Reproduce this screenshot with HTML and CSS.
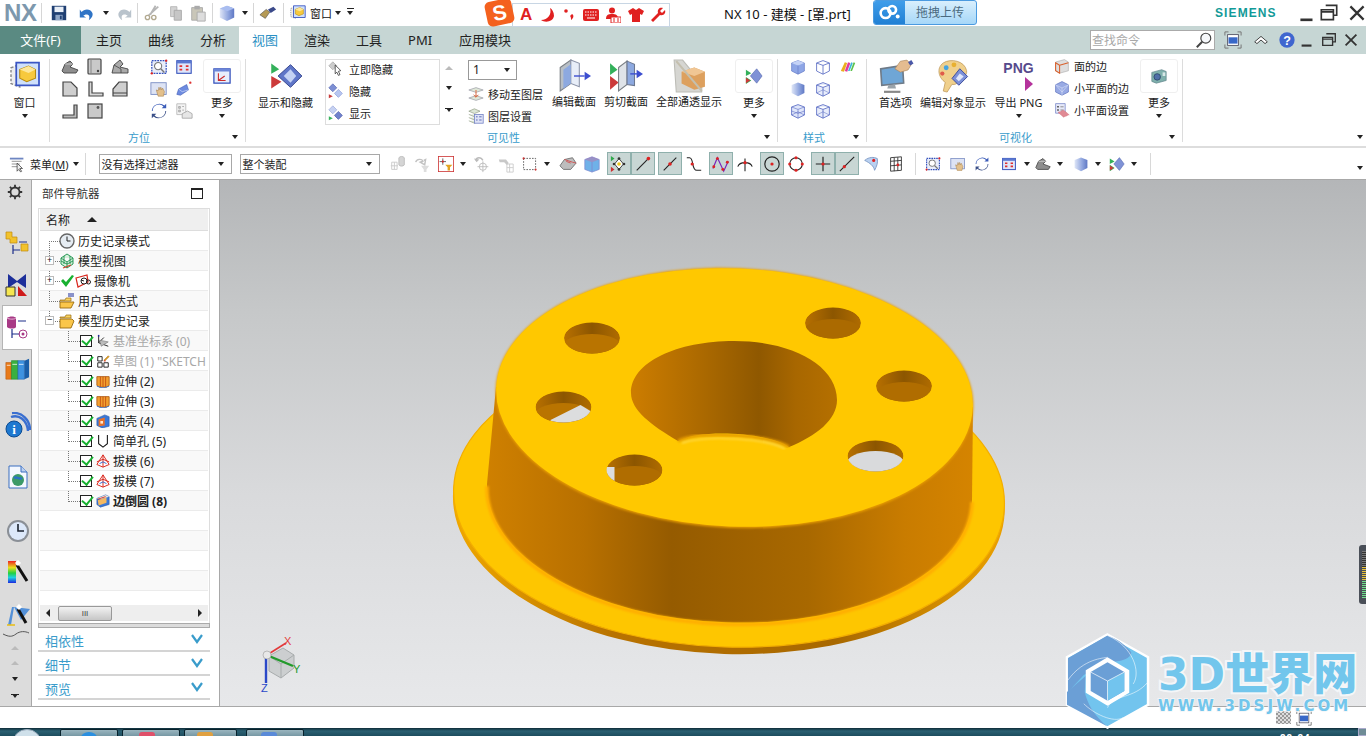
FILE: index.html
```html
<!DOCTYPE html>
<html lang="zh">
<head>
<meta charset="utf-8">
<title>NX 10 - 建模 - [罩.prt]</title>
<link rel="stylesheet" href="styles.css">
</head>
<body>
<svg class="defs" aria-hidden="true">
<defs>
<linearGradient id="gCube" x1="0" x2="1" y1="0" y2="0"><stop offset="0" stop-color="#dfe6f7"/><stop offset=".6" stop-color="#8ea4de"/><stop offset="1" stop-color="#5f78c4"/></linearGradient>
<linearGradient id="gWall" x1="0" x2="1" y1="0" y2="0"><stop offset="0" stop-color="#cf8000"/><stop offset=".2" stop-color="#b87000"/><stop offset=".38" stop-color="#955b00"/><stop offset=".66" stop-color="#a86800"/><stop offset=".86" stop-color="#c97c00"/><stop offset="1" stop-color="#d58400"/></linearGradient>
<linearGradient id="gBore" x1="0" x2="1" y1="0" y2="0"><stop offset="0" stop-color="#cd7d00"/><stop offset=".35" stop-color="#ab6900"/><stop offset=".62" stop-color="#8f5800"/><stop offset=".8" stop-color="#a86700"/><stop offset="1" stop-color="#b57000"/></linearGradient>
<linearGradient id="gHole" x1="0" x2="1" y1="0" y2="0"><stop offset="0" stop-color="#b87000"/><stop offset=".5" stop-color="#8c5600"/><stop offset="1" stop-color="#b06c00"/></linearGradient>
<linearGradient id="gEdge" x1="0" x2="1" y1="0" y2="0"><stop offset="0" stop-color="#f0a800"/><stop offset=".3" stop-color="#b87200"/><stop offset=".7" stop-color="#a86800"/><stop offset="1" stop-color="#eaa000"/></linearGradient>
<filter id="soft" x="-5%" y="-5%" width="110%" height="110%"><feGaussianBlur stdDeviation="1.3"/></filter>
<clipPath id="hc"><ellipse rx="28" ry="15.5"/></clipPath>

<symbol id="save" viewBox="0 0 20 20"><path d="M2 2h16v16H2z" fill="#1f3f72"/><path d="M5 3h10v6H5z" fill="#e8eef6"/><path d="M6 12h8v6H6z" fill="#8fa6c6"/><path d="M11 13h2v4h-2z" fill="#1f3f72"/></symbol>
<symbol id="undo" viewBox="0 0 20 20"><path d="M4 9c3-4 10-4 12 1 1 3-1 6-4 8 1-3 1-5-1-6-2-1-4 0-5 1l3 2H2V6z" fill="#2f74c6"/></symbol>
<symbol id="redo" viewBox="0 0 20 20"><path d="M16 9c-3-4-10-4-12 1-1 3 1 6 4 8-1-3-1-5 1-6 2-1 4 0 5 1l-3 2h7V6z" fill="#b9c3cc"/></symbol>
<symbol id="cut" viewBox="0 0 20 20"><path d="M17 3L6 13M14 2L8 12" stroke="#b5b5b5" stroke-width="2"/><circle cx="5" cy="15" r="2.4" fill="none" stroke="#b2a990" stroke-width="1.5"/><circle cx="12" cy="15" r="2.4" fill="none" stroke="#b2a990" stroke-width="1.5"/></symbol>
<symbol id="copy" viewBox="0 0 20 20"><path d="M4 3h7v11H4z" fill="#d3d3d3" stroke="#b5b5b5"/><path d="M8 7h8v11H8z" fill="#c6c6c6" stroke="#a8a8a8"/></symbol>
<symbol id="paste" viewBox="0 0 20 20"><path d="M3 4h12v14H3z" fill="#c9c6b8" stroke="#aaa"/><path d="M6 2h6v4H6z" fill="#aaa"/><path d="M9 9h9v10H9z" fill="#ddd" stroke="#aaa"/></symbol>
<symbol id="cube" viewBox="0 0 20 20"><path d="M2 5l8-3 8 3v10l-8 4-8-4z" fill="url(#gCube)"/><path d="M2 5l8 3 8-3-8-3z" fill="#a9bdf0"/></symbol>
<symbol id="brush" viewBox="0 0 20 20"><path d="M1 12l7-6 4 3-5 7z" fill="#b59a55" stroke="#555" stroke-width=".7"/><path d="M10 6l6-3 3 3-6 4z" fill="#3b4a8a"/></symbol>
<symbol id="wina" viewBox="0 0 20 20"><path d="M2 5l5-2v13l-5-2z" fill="#eee" stroke="#888" stroke-width=".8" stroke-dasharray="1.5 1"/><path d="M5 2h13v13H5z" fill="#cfe0fb" stroke="#3b56c4"/><path d="M7 6l5-2 4 2v5l-5 2-4-2z" fill="#f7c93d" stroke="#b58a10" stroke-width=".6"/><path d="M7 6l5 2 4-2-4-2z" fill="#fde79a"/></symbol>

<symbol id="o1" viewBox="0 0 20 20"><path d="M2 14l3-7 5-3 3 3-3 3 8 3-2 3H4z" fill="#8e8e8e" stroke="#444" stroke-width=".9"/><path d="M5 7l8 0" stroke="#ccc"/></symbol>
<symbol id="o2" viewBox="0 0 20 20"><rect x="3" y="2" width="13" height="15" rx="1" fill="#c9c9c9" stroke="#444" stroke-width="1.2"/><circle cx="13" cy="14" r="1.2" fill="#444"/><path d="M6 2v15" stroke="#888"/></symbol>
<symbol id="o3" viewBox="0 0 20 20"><path d="M2 16l2-8 6-5 3 4-3 3 8 2v4z" fill="#aaa" stroke="#444" stroke-width=".9"/><path d="M4 8l7 4v4" fill="none" stroke="#444" stroke-width=".8"/></symbol>
<symbol id="o4" viewBox="0 0 20 20"><path d="M3 3h8l6 6v8H3z" fill="#cfcfcf" stroke="#444" stroke-width="1.2"/></symbol>
<symbol id="o5" viewBox="0 0 20 20"><path d="M4 3h3v11h11v3H4z" fill="#d9d9d9" stroke="#444" stroke-width="1.2"/></symbol>
<symbol id="o6" viewBox="0 0 20 20"><path d="M3 17v-7l6-7h8v14zM3 14h14" fill="#cfcfcf" stroke="#444" stroke-width="1.2"/></symbol>
<symbol id="o7" viewBox="0 0 20 20"><path d="M3 17h14V4h-3v10H3z" fill="#bbb" stroke="#444" stroke-width="1.2"/></symbol>
<symbol id="o8" viewBox="0 0 20 20"><rect x="3" y="3" width="14" height="14" fill="#c9c9c9" stroke="#444" stroke-width="1.2"/><circle cx="13" cy="6.500" r="1.400" fill="#555"/></symbol>
<symbol id="zfit" viewBox="0 0 20 20"><rect x="2" y="3" width="16" height="14" fill="#e9eefb" stroke="#3350bb" stroke-width="1.400" stroke-dasharray="2 1"/><circle cx="9" cy="9" r="4" fill="#fff" stroke="#777" stroke-width="1.200"/><path d="M12 12l4 4" stroke="#777" stroke-width="1.600"/><circle cx="18" cy="3" r="1.300" fill="#d22"/><circle cx="2" cy="17" r="1.300" fill="#d22"/></symbol>
<symbol id="zext" viewBox="0 0 20 20"><rect x="2" y="3" width="16" height="14" fill="#dfe6fa" stroke="#3350bb" stroke-width="1.200"/><rect x="2" y="3" width="16" height="3" fill="#5a77d0"/><path d="M5 8h3v2H5zM12 8h3v2h-3zM5 12h3v2H5zM12 12h3v2h-3z" fill="#e03030"/></symbol>
<symbol id="zpan" viewBox="0 0 20 20"><rect x="1" y="3" width="17" height="13" fill="#dde3f4" stroke="#7b8ec4"/><path d="M9 18l-2-7 2 1 1-4 1 3 1-3 1 3 1-2 2 4-1 5z" fill="#e3c08c" stroke="#a57f48" stroke-width=".6"/></symbol>
<symbol id="zbeam" viewBox="0 0 20 20"><path d="M2 16l2-6 9-5 2 6-9 6z" fill="#6d8be0" stroke="#3a55b0" stroke-width=".6"/><path d="M4 10l4 3 7-2" fill="none" stroke="#c9d5f6" stroke-width=".8"/><circle cx="17" cy="3" r="1.300" fill="#d33"/></symbol>
<symbol id="zrot" viewBox="0 0 20 20"><path d="M3 10a7 7 0 0 1 12-5l-2 2h5V2l-2 2A8.500 8.500 0 0 0 2 10z" fill="#3a5bb8"/><path d="M17 10a7 7 0 0 1-12 5l2-2H2v5l2-2a8.500 8.500 0 0 0 14-6z" fill="#3a4f88"/></symbol>
<symbol id="zdoc" viewBox="0 0 20 20"><path d="M2 2h10v12H2z" fill="#f3f3f3" stroke="#bbb"/><path d="M4 5h2v2H4zM8 5h2M4 9h2v2H4zM8 9h2" stroke="#aaa" fill="#ccc"/><path d="M8 13l6-3 5 3v5H8z" fill="#e6e6e6" stroke="#aaa"/></symbol>
<symbol id="csys" viewBox="0 0 20 20"><path d="M1 2h18v16H1z" fill="#e8eefc" stroke="#3350bb" stroke-width="1.400"/><path d="M1 2h18v3H1z" fill="#6c86d8"/><path d="M6 7v8h8M6 15l7-5" fill="none" stroke="#cc2a2a" stroke-width="1.200"/></symbol>
<symbol id="sh" viewBox="0 0 30 24"><path d="M2 1v9l7-4z" fill="#33b05a"/><path d="M2 12v11l9-6z" fill="#cc3a3a"/><path d="M8 12L19 2l10 10-10 10z" fill="#5f76c8" stroke="#2c3d88" stroke-width=".8"/><path d="M13 12l6-6 5 6-5 6z" fill="#c4d2f4"/></symbol>
<symbol id="hide1" viewBox="0 0 20 20"><path d="M1 6l5-5 5 5-5 5z" fill="#ccc" stroke="#999" stroke-width=".7"/><path d="M9 5l7 7-3 1 2 4-2 1-2-4-2 2z" fill="#fff" stroke="#333" stroke-width="1"/></symbol>
<symbol id="hide2" viewBox="0 0 20 20"><path d="M1 6l5-5 5 5-5 5z" fill="#7d8fd4" stroke="#4a5ba8" stroke-width=".7"/><path d="M1 14v5l5-2.500z" fill="#c83a3a"/><path d="M8 13l5-5 5 5-5 5z" fill="#b7c6f0" stroke="#7d8fd4" stroke-width=".7"/></symbol>
<symbol id="hide3" viewBox="0 0 20 20"><path d="M1 6l5-5 5 5-5 5z" fill="#c6d1f2" stroke="#8b9ad2" stroke-width=".7"/><path d="M1 14v5l5-2.500z" fill="#35b25a"/><path d="M8 13l5-5 5 5-5 5z" fill="#6f81cc" stroke="#3e4e9e" stroke-width=".7"/></symbol>
<symbol id="lmove" viewBox="0 0 20 20"><path d="M1 5l9-3 9 3-9 3z" fill="#dfe7d8" stroke="#778" stroke-width=".6"/><path d="M1 15l9-3 9 3-9 3z" fill="#dfe7d8" stroke="#778" stroke-width=".6"/><path d="M10 5v9M7 11l3 3 3-3" fill="none" stroke="#e0643a" stroke-width="1.200"/></symbol>
<symbol id="lset" viewBox="0 0 20 20"><path d="M1 4l7-3 7 3-7 3zM1 8l7 3 7-3M1 12l7 3 7-3M1 16l7 3 7-3" fill="#dde6d6" stroke="#7d8a70" stroke-width=".7"/><rect x="8" y="8" width="11" height="11" fill="#dfe3f6" stroke="#7383c6"/><path d="M10 11h2M14 11h3M10 15h2M14 15h3" stroke="#3b4fa8"/></symbol>
<symbol id="sedit" viewBox="0 0 32 32"><path d="M3 8l10-7v22L3 30z" fill="#b8bfc6" stroke="#7a7f85"/><path d="M13 1l8 3v22l-8-3z" fill="#e8eef8" stroke="#8c94a8"/><path d="M6 10l7-5v18l-7 5z" fill="#8da9e0"/><path d="M16 16h10" stroke="#3c4ed0" stroke-width="1.300"/><path d="M26 12l6 4-6 4z" fill="#3c4ed0"/></symbol>
<symbol id="scut" viewBox="0 0 32 32"><path d="M1 4v11l7-5z" fill="#33b05a"/><path d="M1 16v13l8-7z" fill="#cc3a3a"/><path d="M9 8l8-6v22l-8 6z" fill="#dfe3e8" stroke="#7a7f85"/><path d="M17 2l7 3v20l-7-1z" fill="#8da9e0" stroke="#6c7890"/><path d="M20 14h7" stroke="#3c4ed0" stroke-width="1.300"/><path d="M26 10l6 4-6 4z" fill="#3c4ed0"/></symbol>
<symbol id="sall" viewBox="0 0 32 32"><path d="M2 1h8l18 22v8H4z" fill="#d6d6d2" stroke="#bcbcb6"/><path d="M9 12l12-4 10 4v14l-10 3-12-6z" fill="#dda05e"/><path d="M9 12l12 4 10-4-10-4z" fill="#f0c694"/><path d="M4 2l24 28" stroke="#c4bfae" stroke-width="2"/></symbol>
<symbol id="morev" viewBox="0 0 20 20"><path d="M1 3v7l6-3zM1 11v8l6-4z" fill="#33b05a"/><path d="M1 12v6l5-3z" fill="#cc3a3a"/><path d="M6 10l7-8 6 8-6 8z" fill="#7f92d6" stroke="#4f60a8" stroke-width=".6"/></symbol>
<symbol id="st1" viewBox="0 0 20 20"><path d="M2 5l8-3 8 3v10l-8 4-8-4z" fill="#8ea6e6" stroke="#5e75c4" stroke-width=".8"/><path d="M2 5l8 3 8-3-8-3z" fill="#c4d2f6"/><path d="M10 8v11" stroke="#5e75c4" stroke-width=".7"/></symbol>
<symbol id="st2" viewBox="0 0 20 20"><path d="M2 5l8-3 8 3v10l-8 4-8-4zM2 5l8 3 8-3M10 8v11" fill="#fff" stroke="#5265c0"/></symbol>
<symbol id="st3" viewBox="0 0 20 20"><path d="M2 5l8-3 8 3v10l-8 4-8-4z" fill="url(#gCube)"/></symbol>
<symbol id="st4" viewBox="0 0 20 20"><path d="M2 5l8-3 8 3v10l-8 4-8-4zM2 5l8 3 8-3M10 8v11" fill="#e8edfb" stroke="#5265c0"/><path d="M2 15l8-4 8 4" fill="none" stroke="#5265c0" stroke-width=".6"/></symbol>
<symbol id="st5" viewBox="0 0 20 20"><path d="M2 5l8-3 8 3v10l-8 4-8-4z" fill="#dfe6fa" stroke="#5265c0"/><path d="M2 5l8 3 8-3M10 8v11M2 15l8-4 8 4M2 10l8 3 8-3" fill="none" stroke="#5265c0" stroke-width=".7"/></symbol>
<symbol id="rbw" viewBox="0 0 20 20"><path d="M1 15L6 4l3 1-4 11z" fill="#eab020"/><path d="M6 15L10 4l3 1-4 11z" fill="#e03aa0"/><path d="M10 15l4-11 2 1-4 10z" fill="#3bb8d8"/><path d="M13 15l4-11 2 1-4 10z" fill="#5cc24a"/></symbol>
<symbol id="pref" viewBox="0 0 32 32"><path d="M2 9l20-3 1 16-20 2z" fill="#6fa6d6" stroke="#6f7b88" stroke-width="1.500"/><path d="M9 24l6-1 1 4H8z" fill="#9aa3aa"/><path d="M5 29h15v2H5z" fill="#888"/><path d="M15 9l5-7 6-1 4 4-3 5-7 2z" fill="#e4bc90" stroke="#a07a50" stroke-width=".5"/><path d="M27 3l3-2 2 3-3 2z" fill="#4a58a8"/></symbol>
<symbol id="palette" viewBox="0 0 36 36"><path d="M8 4c8-5 22-2 24 8 1 6-6 6-8 10-1 3-4 5-7 4l-5 8-4-1 2-9C4 20 0 10 8 4z" fill="#f0d08c" stroke="#b89050" stroke-width=".7"/><circle cx="11" cy="9" r="2.500" fill="#45a4e0"/><circle cx="19" cy="6" r="2.500" fill="#e8b030"/><circle cx="7" cy="15" r="2.200" fill="#e05a4a"/><path d="M17 20l8-10 8 8-9 9z" fill="#7c90d8" stroke="#3c4c9c"/><path d="M21 20l4-5 4 3-5 5z" fill="#dfe6fa"/></symbol>
<symbol id="fedge" viewBox="0 0 20 20"><path d="M2 5l11-3 5 3v11l-11 3-5-3z" fill="#dedede" stroke="#999" stroke-width=".6"/><path d="M2 6l5 3v10l-5-3zM7 9l11-3" fill="none" stroke="#d9602c" stroke-width="1.300"/></symbol>
<symbol id="fcet" viewBox="0 0 20 20"><path d="M2 6l8-4 8 4v9l-8 4-8-4z" fill="#98aae4" stroke="#6b7ec4"/><path d="M2 6l8 4 8-4M10 10v9M2 6l8 9M18 6l-8 9" fill="none" stroke="#dfe6fa" stroke-width=".7"/></symbol>
<symbol id="fset" viewBox="0 0 20 20"><path d="M2 2h12v12H2z" fill="#e6e9f8" stroke="#7c8aca"/><path d="M4 5h2v2H4zM4 9h2v2H4z" fill="#444"/><path d="M8 6h4M8 10h4" stroke="#777"/><path d="M5 13l7-3 7 6-7 3z" fill="#e08a94" stroke="#c4505c" stroke-width=".6" stroke-dasharray="1 1"/></symbol>
<symbol id="cam" viewBox="0 0 20 20"><path d="M2 6l11-3 5 2v10l-11 3-5-2z" fill="#7fb0ac" stroke="#5a7c84" stroke-width=".7"/><circle cx="8" cy="11" r="3.600" fill="#4f6fa8" stroke="#2f4a6c"/><path d="M14 6h3v4h-3z" fill="#d8e8e8"/></symbol>
<symbol id="menu" viewBox="0 0 20 20"><path d="M1 3h15v2H1z" fill="#6e86c2"/><path d="M3 7h11M3 10h9M3 13h8" stroke="#8a8a8a"/><path d="M9 9v9l2-2 2 3 1-1-2-3h3z" fill="#eee" stroke="#333" stroke-width=".8"/></symbol>
<symbol id="sel1" viewBox="0 0 20 20"><path d="M2 12h8M6 8v8M3 8h6v8H3z" fill="none" stroke="#c9c9c9"/><path d="M11 3a4 4 0 0 1 6 0v8a4 4 0 0 1-6 0z" fill="#d5d5d5" stroke="#bbb"/></symbol>
<symbol id="sel2" viewBox="0 0 20 20"><path d="M3 8c1-4 7-4 8-1l-3 1 5 3 1-6-2 1" fill="none" stroke="#c2c2c2" stroke-width="1.600"/><path d="M9 12h9l-3 4v3h-3v-3z" fill="#ddd"/></symbol>
<symbol id="sel3" viewBox="0 0 20 20"><rect x=".5" y=".5" width="19" height="19" fill="#fff" stroke="#c33" stroke-width="1"/><path d="M6 3v8M2 7h8" stroke="#444"/><circle cx="6" cy="7" r="1.300" fill="#d22"/><path d="M9 11h9l-3 3v4h-3v-4z" fill="#e2a420"/></symbol>
<symbol id="sel4" viewBox="0 0 20 20"><path d="M3 6c1-4 6-4 8 0" fill="none" stroke="#bbb" stroke-width="1.500"/><path d="M1 4l3 4 3-3z" fill="#bbb"/><circle cx="11" cy="13" r="4" fill="none" stroke="#bbb"/><path d="M11 7v12M5 13h12" stroke="#bbb"/></symbol>
<symbol id="sel5" viewBox="0 0 20 20"><path d="M2 5h8l3 4-2 2-3-3H3z" fill="#c8c8c8"/><path d="M11 10h7v9h-7zM14 10v9M11 14h7" fill="none" stroke="#ccc"/></symbol>
<symbol id="sel6" viewBox="0 0 20 20"><rect x="2" y="3" width="15" height="14" fill="#fff" stroke="#444" stroke-dasharray="2 1.500"/><circle cx="2" cy="3" r="1.300" fill="#c33"/><circle cx="17" cy="17" r="1.300" fill="#c33"/></symbol>
<symbol id="sel7" viewBox="0 0 20 20"><path d="M1 12l5-7 9-2 4 6-6 7H5z" fill="#bdbdbd" stroke="#555" stroke-width=".8"/><path d="M6 5l9 3 4 1M8 7l5 2" stroke="#d05050" stroke-width="1" fill="none"/></symbol>
<symbol id="sel8" viewBox="0 0 20 20"><path d="M2 5l8-3 8 3v11l-8 3-8-3z" fill="#6fb1e8" stroke="#7f8ad0" stroke-width=".8"/><path d="M2 5l8 3 8-3-8-3z" fill="#e05a8a" fill-opacity=".35"/><path d="M10 8v11" stroke="#7f8ad0"/></symbol>
<symbol id="snap1" viewBox="0 0 20 20"><path d="M1 1v6l4-3z" fill="#2ea84a"/><path d="M1 13v6l4-3z" fill="#c33"/><path d="M5 10l5-6 5 6-5 6z" fill="#fff" stroke="#333"/><circle cx="10" cy="10" r="2" fill="#ecc820"/><circle cx="10" cy="4" r="1.500" fill="#333"/><circle cx="10" cy="16" r="1.500" fill="#333"/><circle cx="4.500" cy="10" r="1.500" fill="#333"/><circle cx="15.500" cy="10" r="1.500" fill="#333"/></symbol>
<symbol id="snap2" viewBox="0 0 20 20"><path d="M3 17L17 3" stroke="#222" stroke-width="1.200"/><circle cx="16" cy="4" r="2" fill="#d22"/></symbol>
<symbol id="snap3" viewBox="0 0 20 20"><path d="M3 17L17 3" stroke="#222" stroke-width="1.200"/><circle cx="10" cy="10" r="2" fill="#d22"/></symbol>
<symbol id="snap4" viewBox="0 0 20 20"><path d="M2 3h3c5 0 2 14 8 14h5" fill="none" stroke="#222" stroke-width="1.200"/><circle cx="8" cy="10" r="1.800" fill="#d22"/></symbol>
<symbol id="snap5" viewBox="0 0 20 20"><path d="M1 15L6 3l7 15 5-11" fill="none" stroke="#7a22b8" stroke-width="1.300"/><circle cx="2" cy="13" r="1.600" fill="#d22"/><circle cx="6" cy="4" r="1.600" fill="#d22"/><circle cx="12" cy="16" r="1.600" fill="#d22"/><circle cx="17" cy="8" r="1.600" fill="#d22"/></symbol>
<symbol id="snap6" viewBox="0 0 20 20"><path d="M2 13c2-6 14-6 16 0M10 4v14" fill="none" stroke="#222" stroke-width="1.200"/><circle cx="10" cy="8.500" r="1.800" fill="#d22"/></symbol>
<symbol id="snap7" viewBox="0 0 20 20"><circle cx="10" cy="10" r="8" fill="none" stroke="#222" stroke-width="1.300"/><circle cx="10" cy="10" r="1.800" fill="#d22"/></symbol>
<symbol id="snap8" viewBox="0 0 20 20"><circle cx="10" cy="10" r="7" fill="none" stroke="#222" stroke-width="1.200"/><circle cx="10" cy="3" r="1.700" fill="#d22"/><circle cx="10" cy="17" r="1.700" fill="#d22"/><circle cx="3" cy="10" r="1.700" fill="#d22"/><circle cx="17" cy="10" r="1.700" fill="#d22"/></symbol>
<symbol id="snap9" viewBox="0 0 20 20"><path d="M10 2v16M2 10h16" stroke="#222" stroke-width="1.300"/><circle cx="10" cy="10" r="1.800" fill="#d22"/></symbol>
<symbol id="snap10" viewBox="0 0 20 20"><path d="M2 18L18 2" stroke="#222" stroke-width="1.200"/><circle cx="7" cy="13" r="1.800" fill="#d22"/></symbol>
<symbol id="snap11" viewBox="0 0 20 20"><path d="M3 6c5-4 10-4 14-2 1 5-1 9-3 13-1-5-5-8-11-11z" fill="#b9d0f0" stroke="#7c98c4"/><circle cx="13" cy="6" r="1.700" fill="#d22"/></symbol>
<symbol id="snap12" viewBox="0 0 20 20"><path d="M4 3l12-1v15l-12 1zM8 3v15M12 2.500v15M4 7l12-1M4 12l12-1" fill="none" stroke="#333" stroke-width="1"/><circle cx="12" cy="11" r="1.500" fill="#d22"/></symbol>

<symbol id="min" viewBox="0 0 20 20"><path d="M4 15h11v2.400H4z" fill="#333"/></symbol>
<symbol id="rest" viewBox="0 0 20 20"><path d="M7 3h10v9h-3M3 7h11v9H3zM3 7v2h11" fill="none" stroke="#333" stroke-width="1.500"/></symbol>
<symbol id="close" viewBox="0 0 20 20"><path d="M4 4l12 12M16 4L4 16" stroke="#333" stroke-width="2"/></symbol>
<symbol id="search" viewBox="0 0 20 20"><circle cx="12" cy="8" r="5.500" fill="#f6f8fb" stroke="#444" stroke-width="1.300"/><path d="M8 12l-6 6" stroke="#444" stroke-width="2.200"/></symbol>
<symbol id="full" viewBox="0 0 20 20"><path d="M1 5V1h4M15 1h4v4M19 15v4h-4M5 19H1v-4" fill="none" stroke="#777" stroke-width="1.100"/><rect x="4" y="4" width="12" height="12" fill="#fff" stroke="#556"/><rect x="5" y="7" width="10" height="7" fill="#3868c8"/></symbol>
<symbol id="upchev" viewBox="0 0 20 20"><path d="M3 12l7-6 7 6-2.500 2L10 10l-4.500 4z" fill="#fff" stroke="#333" stroke-width="1"/></symbol>
<symbol id="help" viewBox="0 0 20 20"><circle cx="10" cy="10" r="8.500" fill="#3f66cf"/><text x="10" y="15" font-size="14" font-weight="700" text-anchor="middle" fill="#fff" font-family="Liberation Sans">?</text></symbol>

<symbol id="gear" viewBox="0 0 20 20"><circle cx="10" cy="10" r="5" fill="none" stroke="#333" stroke-width="2"/><path d="M10 2v3M10 15v3M2 10h3M15 10h3M4.300 4.300l2 2M13.700 13.700l2 2M15.700 4.300l-2 2M6.300 13.700l-2 2" stroke="#333" stroke-width="2"/></symbol>
<symbol id="nasm" viewBox="0 0 24 24"><path d="M1 1h6v5h5v6H5v-4H1z" fill="#f2c22c" stroke="#c08a10" stroke-width=".7"/><path d="M16 13h7v7h-7z" fill="#f2c22c" stroke="#c08a10" stroke-width=".7"/><path d="M8 14v9M8 19h7M14 11h8" stroke="#1d2f8a" stroke-width="1.200"/></symbol>
<symbol id="ncon" viewBox="0 0 24 24"><path d="M3 1l9 7 9-7v14l-9-6-9 6z" fill="#1d2f9a"/><path d="M1 14h9v9H1z" fill="#f5e650" stroke="#333"/><path d="M13 23L22 23 13 13z" fill="#cf1a1a"/></symbol>
<symbol id="npart" viewBox="0 0 24 24"><path d="M1 2c2-2 8-2 9 0v9c-1 2-7 2-9 0z" fill="#a83a86"/><path d="M1 2c2 1.500 8 1.500 9 0" fill="none" stroke="#e8b8d8"/><path d="M12 5h8M6 13v9M6 18h8" stroke="#1d2f8a" stroke-width="1.200"/><circle cx="17" cy="18" r="4" fill="none" stroke="#a83a86"/><circle cx="17" cy="18" r="1.500" fill="#a83a86"/></symbol>
<symbol id="nbooks" viewBox="0 0 28 24"><path d="M2 5h6v18H2z" fill="#e87a1a" stroke="#b85a10" stroke-width=".6"/><path d="M8 3h7v20H8z" fill="#3ab040" stroke="#208028" stroke-width=".6"/><path d="M15 3h7v20h-7z" fill="#3e92e0" stroke="#2066b0" stroke-width=".6"/><path d="M22 3l5-2v20l-5 2z" fill="#1a5ea8"/><path d="M3 8h4M9 7h5M16 7h5" stroke="#fff" stroke-width=".8"/></symbol>
<symbol id="ninfo" viewBox="0 0 26 26"><path d="M6 5c8-3 16 3 17 14M7 1c10-1 18 7 18 17" fill="none" stroke="#3a6fd0" stroke-width="2.400"/><circle cx="9" cy="17" r="8" fill="#1d78d0" stroke="#0c4a90"/><text x="9" y="22" font-size="13" font-weight="700" text-anchor="middle" fill="#fff" font-family="Liberation Serif">i</text></symbol>
<symbol id="nhtml" viewBox="0 0 24 24"><path d="M3 1h12l6 6v16H3z" fill="#f4f8ff" stroke="#3a6fc0"/><path d="M15 1v6h6" fill="#bcd0f0" stroke="#3a6fc0"/><circle cx="12" cy="15" r="6" fill="#3c9a68"/><path d="M8 13c3-2 5 2 8 0" stroke="#2a72c8" stroke-width="2.400" fill="none"/></symbol>
<symbol id="nclock" viewBox="0 0 24 24"><circle cx="12" cy="12" r="11" fill="#8a8f96"/><circle cx="12" cy="12" r="9" fill="#dce8fa"/><path d="M12 5v7h6" fill="none" stroke="#1a2230" stroke-width="1.600"/></symbol>
<symbol id="nrain" viewBox="0 0 24 24"><defs><linearGradient id="gRain" x1="0" x2="0" y1="0" y2="1"><stop offset="0" stop-color="#ee2222"/><stop offset=".3" stop-color="#e8e020"/><stop offset=".55" stop-color="#22d040"/><stop offset=".75" stop-color="#20d0e0"/><stop offset="1" stop-color="#1c28e0"/></linearGradient></defs><path d="M2 1h8v22H2z" fill="url(#gRain)"/><path d="M11 5l10 16" stroke="#111" stroke-width="3"/><path d="M9 3l3 3 3-3-3-3z" fill="#fff"/></symbol>
<symbol id="nwand" viewBox="0 0 24 24"><path d="M2 22L6 4h2l-3 18zM8 4l16 2-9 11z" fill="#3a82d8" fill-opacity=".85"/><path d="M1 22h8" stroke="#e8c020" stroke-width="1.600"/><path d="M12 6l8 14" stroke="#111" stroke-width="3"/><path d="M10 4l3 3 3-3-3-3z" fill="#fff"/></symbol>

<symbol id="clock" viewBox="0 0 16 16"><circle cx="8" cy="8" r="7" fill="#e6ecf2" stroke="#666" stroke-width="1.400"/><path d="M8 3.500V8h3.500" fill="none" stroke="#222"/></symbol>
<symbol id="mview" viewBox="0 0 16 16"><path d="M2 5l6-4 6 4v6l-6 4-6-4zM2 5l6 4 6-4M8 9v6M2 8l6 3 6-3M5 3v8M11 3v8" fill="#d8f0dc" stroke="#2a9a58"/><path d="M4 15l8-3" stroke="#d83a2a" stroke-width="1.200"/></symbol>
<symbol id="check" viewBox="0 0 16 16"><path d="M2 8l2-2 3 3 6-7 2 1-8 11z" fill="#18b030"/></symbol>
<symbol id="camr" viewBox="0 0 16 16"><path d="M1 5l11-3 1 7-10 5z" fill="#fff" stroke="#d8261c" stroke-width="1.200"/><circle cx="9" cy="8" r="3" fill="#fff" stroke="#222"/><circle cx="13.500" cy="9" r="2" fill="none" stroke="#222"/><path d="M6 7l3 1" stroke="#222"/></symbol>
<symbol id="folder" viewBox="0 0 16 16"><path d="M1 4h5l1-2h5v3H1z" fill="#f7d260" stroke="#986c10" stroke-width=".7"/><path d="M1 15V6h12l2 2-3 7z" fill="#fac64a" stroke="#986c10" stroke-width=".9"/></symbol>
<symbol id="folderx" viewBox="0 0 16 16"><path d="M1 7h5l1-2h5v3H1z" fill="#f7d260" stroke="#986c10" stroke-width=".7"/><path d="M1 15V9h11l3 0-3 6z" fill="#fac64a" stroke="#986c10" stroke-width=".9"/><path d="M9 1h6M9 3h6" stroke="#1a2a9a"/></symbol>
<symbol id="tcs" viewBox="0 0 16 16"><path d="M3 1v9M3 10l11 4M3 10l6-6" stroke="#111" fill="none"/><path d="M4 7l10 2-8 5z" fill="#bbb" stroke="#666" stroke-width=".6"/><circle cx="3" cy="2" r="1" fill="#22a"/></symbol>
<symbol id="tsk" viewBox="0 0 16 16"><path d="M2 3h5v5H2zM2 10h5v5H2zM9 10h5v5H9z" fill="#fff" stroke="#111"/><path d="M9 7l5-5 1 1-5 5z" fill="#e0a020" stroke="#a06000" stroke-width=".5"/><path d="M9 8h2" stroke="#d22"/></symbol>
<symbol id="text" viewBox="0 0 16 16"><path d="M1 3h14v10l-3 2H4l-3-2z" fill="#f2a030" stroke="#b05a10"/><path d="M5 3v12M8 3v12M11 3v12" stroke="#c24a10"/><path d="M1 14l7 2 7-2" stroke="#3a7ad8" fill="none"/></symbol>
<symbol id="tshell" viewBox="0 0 16 16"><path d="M1 5l9-4 5 2v11l-8 2-6-3z" fill="#3a78d8" stroke="#1e4ea0" stroke-width=".6"/><path d="M3 6l7-2v9l-7 1z" fill="#e8702a"/><path d="M5 8h3v3H5z" fill="#ffe9d0"/></symbol>
<symbol id="thole" viewBox="0 0 16 16"><path d="M3 1v10l5 4 5-4V1" fill="none" stroke="#111" stroke-width="1.200"/></symbol>
<symbol id="tdraft" viewBox="0 0 16 16"><path d="M8 1L1 12l7 3 7-3zM1 9l7-3 7 3M8 1v14" fill="#fff" stroke="#d8261c" stroke-width="1.100"/><path d="M4 11l4-2 4 2" fill="none" stroke="#2a5fc8"/></symbol>
<symbol id="tblend" viewBox="0 0 16 16"><path d="M1 5l10-4 4 2v9l-10 3-4-3z" fill="#3a78d8" stroke="#1e4ea0" stroke-width=".6"/><path d="M1 5l10-4 4 2-10 3z" fill="#e8e8e0"/><path d="M2 7l10-3v6L3 13z" fill="#f4b860"/><path d="M2 6l9-3" stroke="#d8261c"/></symbol>
<symbol id="chev" viewBox="0 0 12 10"><path d="M1 1l5 7 5-7" fill="none" stroke="#3a9ccb" stroke-width="2.200"/></symbol>
</defs>
</svg>

<div class="app">
  <header class="titlebar">
    <span class="nxlogo">NX</span><i class="vsep ml4"></i>
    <svg class="qa ml5 off1"><use href="#save"/></svg>
    <svg class="qa ml4"><use href="#undo"/></svg><b class="qarr ml1"></b>
    <svg class="qa"><use href="#redo"/></svg><i class="vsep ml1"></i>
    <svg class="qa ml2"><use href="#cut"/></svg><svg class="qa"><use href="#copy"/></svg><svg class="qa mln2"><use href="#paste"/></svg><i class="vsep ml2"></i>
    <svg class="qa ml2"><use href="#cube"/></svg><b class="qarr"></b><i class="vsep ml2"></i>
    <svg class="qa ml2"><use href="#brush"/></svg><i class="vsep ml3"></i>
    <svg class="qa ml2"><use href="#wina"/></svg><span class="qatext">窗口</span><b class="qarr"></b><b class="qarr bar"></b>
    <span class="wintitle">NX 10 - 建模 - [罩.prt]</span>
    <div class="upload"><span class="upicon"><svg class="upsvg" viewBox="0 0 20 14"><circle cx="6" cy="8" r="4.500" fill="none" stroke="#fff" stroke-width="2.400"/><circle cx="12" cy="5" r="3.500" fill="none" stroke="#fff" stroke-width="2.400"/><circle cx="17" cy="11" r="1.800" fill="#fff"/></svg></span><span class="uptext">拖拽上传</span></div>
    <span class="siemens">SIEMENS</span>
    <svg class="wc ml19"><use href="#min"/></svg><svg class="wc"><use href="#rest"/></svg><svg class="wc ml6"><use href="#close"/></svg>
    <div class="sogou">
      <span class="slogo">S</span>
      <span class="sgbar">
        <span class="sgA">A</span>
        <svg class="sg" viewBox="0 0 16 16"><path d="M11 1c2 6-2 12-9 12 4 3 12 2 13-4 0-4-2-7-4-8z" fill="#e02020"/></svg>
        <svg class="sg" viewBox="0 0 16 16"><circle cx="5" cy="4" r="1.800" fill="#e02020"/><path d="M11 7c2 1 2 4-1 6 0-2 0-3-1-4z" fill="#e02020"/></svg>
        <svg class="sg" viewBox="0 0 16 16"><rect y="2" width="16" height="12" rx="2" fill="#e02020"/><path d="M2 5h12M2 8h12" stroke="#fff" stroke-dasharray="1.500 1"/><path d="M4 11h8" stroke="#fff"/></svg>
        <svg class="sg" viewBox="0 0 16 16"><circle cx="7" cy="3.500" r="3" fill="#e02020"/><path d="M1 12c0-4 2-5 6-5s6 1 6 5z" fill="#e02020"/><rect x="6" y="10" width="10" height="6" fill="#fff" stroke="#e02020"/><path d="M8 12h2M12 12h2M8 14h2M12 14h2" stroke="#e02020"/></svg>
        <svg class="sg" viewBox="0 0 16 16"><path d="M5 1l3 2 3-2 5 3-2 4-2-1v8H4V7L2 8 0 4z" fill="#e02020"/></svg>
        <svg class="sg" viewBox="0 0 16 16"><path d="M15 3l-3 3-2-2 3-3c-3-1-6 1-5 5l-7 7 2 2 7-7c4 1 6-2 5-5z" fill="#e02020"/></svg>
      </span>
    </div>
  </header>

  <nav class="tabs">
    <span class="tab file">文件(F)</span>
    <span class="tab">主页</span><span class="tab">曲线</span><span class="tab">分析</span>
    <span class="tab active">视图</span>
    <span class="tab">渲染</span><span class="tab">工具</span><span class="tab pmi">PMI</span><span class="tab">应用模块</span>
    <div class="tabright">
      <div class="search"><span>查找命令</span><svg class="i18"><use href="#search"/></svg></div>
      <svg class="cell22 ml7"><use href="#full"/></svg>
      <svg class="cell22 ml6"><use href="#upchev"/></svg>
      <svg class="cell22 ml4"><use href="#help"/></svg>
      <svg class="i18"><use href="#min"/></svg>
      <svg class="i18 ml4"><use href="#rest"/></svg>
      <svg class="i18 ml4"><use href="#close"/></svg>
    </div>
  </nav>

  <section class="ribbon">
    <div class="group g-win">
      <div class="gbody">
        <div class="big w50"><svg class="i34"><use href="#wina"/></svg><span>窗口</span><b class="arr"></b></div>
      </div>
      <div class="gfoot"></div>
    </div>

    <div class="group g-ori">
      <div class="gbody pl7">
        <div class="grid3">
          <svg class="i20"><use href="#o1"/></svg><svg class="i20"><use href="#o2"/></svg><svg class="i20"><use href="#o3"/></svg>
          <svg class="i20"><use href="#o4"/></svg><svg class="i20"><use href="#o5"/></svg><svg class="i20"><use href="#o6"/></svg>
          <svg class="i20"><use href="#o7"/></svg><svg class="i20"><use href="#o8"/></svg>
        </div>
        <div class="grid2 ml14">
          <svg class="i18"><use href="#zfit"/></svg><svg class="i18"><use href="#zext"/></svg>
          <svg class="i18"><use href="#zpan"/></svg><svg class="i18"><use href="#zbeam"/></svg>
          <svg class="i18"><use href="#zrot"/></svg><svg class="i18"><use href="#zdoc"/></svg>
        </div>
        <div class="more ml7"><span class="morebox"><svg class="i18"><use href="#csys"/></svg></span><span>更多</span><b class="arr"></b></div>
      </div>
      <div class="gfoot"><span class="glabel lb-ori">方位</span><b class="arr corner"></b></div>
    </div>

    <div class="group g-vis">
      <div class="gbody">
        <div class="big w55 ml12"><svg class="sh"><use href="#sh"/></svg><span>显示和隐藏</span></div>
        <div class="gallery ml12">
          <div class="grow"><svg class="i16"><use href="#hide1"/></svg><span>立即隐藏</span></div>
          <div class="grow"><svg class="i16"><use href="#hide2"/></svg><span>隐藏</span></div>
          <div class="grow"><svg class="i16"><use href="#hide3"/></svg><span>显示</span></div>
        </div>
        <div class="spin"><b class="arrup"></b><b class="arr"></b><b class="arr barred"></b></div>
        <div class="layer ml10">
          <div class="mini">1<b class="arr"></b></div>
          <div class="lrow"><svg class="i16"><use href="#lmove"/></svg><span>移动至图层</span></div>
          <div class="lrow"><svg class="i16"><use href="#lset"/></svg><span>图层设置</span></div>
        </div>
        <div class="big w44 ml4"><svg class="i30"><use href="#sedit"/></svg><span>编辑截面</span></div>
        <div class="big w44 ml8"><svg class="i30"><use href="#scut"/></svg><span>剪切截面</span></div>
        <div class="big w66 ml8"><svg class="i30"><use href="#sall"/></svg><span>全部通透显示</span></div>
        <div class="more ml13"><span class="morebox"><svg class="i18"><use href="#morev"/></svg></span><span>更多</span><b class="arr"></b></div>
      </div>
      <div class="gfoot"><span class="glabel lb-vis">可见性</span><b class="arr corner"></b></div>
    </div>

    <div class="group g-sty">
      <div class="gbody pl7">
        <div class="grid3">
          <svg class="i16"><use href="#st1"/></svg><svg class="i16"><use href="#st2"/></svg><svg class="i16"><use href="#rbw"/></svg>
          <svg class="i16"><use href="#st3"/></svg><svg class="i16"><use href="#st4"/></svg><span></span>
          <svg class="i16"><use href="#st5"/></svg><svg class="i16"><use href="#st4"/></svg>
        </div>
      </div>
      <div class="gfoot"><span class="glabel lb-sty">样式</span><b class="arr corner"></b></div>
    </div>

    <div class="group g-viz">
      <div class="gbody">
        <div class="big w33 ml12"><svg class="i32"><use href="#pref"/></svg><span>首选项</span></div>
        <div class="big w66 ml8"><svg class="i32"><use href="#palette"/></svg><span>编辑对象显示</span></div>
        <div class="big w49 ml8"><span class="png">PNG</span><span class="pngarrow"></span><span>导出 PNG</span><b class="arr"></b></div>
        <div class="layer ml11 w80 lift">
          <div class="lrow"><svg class="i16"><use href="#fedge"/></svg><span>面的边</span></div>
          <div class="lrow"><svg class="i16"><use href="#fcet"/></svg><span>小平面的边</span></div>
          <div class="lrow"><svg class="i16"><use href="#fset"/></svg><span>小平面设置</span></div>
        </div>
        <div class="more ml6"><span class="morebox"><svg class="i18"><use href="#cam"/></svg></span><span>更多</span><b class="arr"></b></div>
      </div>
      <div class="gfoot"><span class="glabel lb-viz">可视化</span><b class="arr corner"></b></div>
    </div>
    <div class="group g-rest"><div class="gbody"></div><div class="gfoot"><b class="arr corner"></b></div></div>
  </section>

  <section class="toolbar">
    <svg class="i18 ml9"><use href="#menu"/></svg>
    <span class="menutext">菜单(<u>M</u>)</span><b class="arr ml4"></b><i class="tsep ml6"></i>
    <div class="combo c133 ml13">没有选择过滤器<b class="arr"></b></div>
    <div class="combo c140 ml8">整个装配<b class="arr"></b></div>
    <span class="tb ml6"><svg class="i18"><use href="#sel1"/></svg></span>
    <span class="tb"><svg class="i18"><use href="#sel2"/></svg></span>
    <span class="tb"><svg class="i16"><use href="#sel3"/></svg></span><b class="tbarr"></b>
    <span class="tb"><svg class="i18"><use href="#sel4"/></svg></span>
    <span class="tb"><svg class="i18"><use href="#sel5"/></svg></span>
    <span class="tb"><svg class="i16"><use href="#sel6"/></svg></span><b class="tbarr"></b>
    <span class="tb ml2"><svg class="i18"><use href="#sel7"/></svg></span>
    <span class="tb"><svg class="i18"><use href="#sel8"/></svg></span>
    <span class="tb on ml3"><svg class="i18"><use href="#snap1"/></svg></span>
    <span class="tb on"><svg class="i18"><use href="#snap2"/></svg></span>
    <span class="tb on ml3"><svg class="i18"><use href="#snap3"/></svg></span>
    <span class="tb"><svg class="i18"><use href="#snap4"/></svg></span>
    <span class="tb on ml3"><svg class="i18"><use href="#snap5"/></svg></span>
    <span class="tb"><svg class="i18"><use href="#snap6"/></svg></span>
    <span class="tb on ml3"><svg class="i18"><use href="#snap7"/></svg></span>
    <span class="tb"><svg class="i18"><use href="#snap8"/></svg></span>
    <span class="tb on ml3"><svg class="i18"><use href="#snap9"/></svg></span>
    <span class="tb on"><svg class="i18"><use href="#snap10"/></svg></span>
    <span class="tb"><svg class="i18"><use href="#snap11"/></svg></span>
    <span class="tb ml1"><svg class="i18"><use href="#snap12"/></svg></span>
    <i class="tsep ml7"></i>
    <span class="tb ml5"><svg class="i16"><use href="#zfit"/></svg></span>
    <span class="tb ml1"><svg class="i16"><use href="#zpan"/></svg></span>
    <span class="tb"><svg class="i16"><use href="#zrot"/></svg></span>
    <span class="tb ml3"><svg class="i16"><use href="#zext"/></svg></span><b class="tbarr ml1"></b>
    <span class="tb mln3"><svg class="i18"><use href="#o1"/></svg></span><b class="tbarr"></b>
    <span class="tb ml2"><svg class="i16"><use href="#st3"/></svg></span><b class="tbarr"></b>
    <span class="tb"><svg class="i16"><use href="#morev"/></svg></span><b class="tbarr"></b>
    <i class="tsep ml9"></i>
    <b class="arr tend"></b>
  </section>

  <main class="main">
    <aside class="rail">
      <svg class="r1 i18"><use href="#gear"/></svg>
      <svg class="r2 i24"><use href="#nasm"/></svg>
      <svg class="r3 i24"><use href="#ncon"/></svg>
      <span class="railtab"><svg class="i24"><use href="#npart"/></svg></span>
      <svg class="r5 i26"><use href="#nbooks"/></svg>
      <svg class="r6 i26"><use href="#ninfo"/></svg>
      <svg class="r7 i24"><use href="#nhtml"/></svg>
      <svg class="r8 i24"><use href="#nclock"/></svg>
      <svg class="r9 i24"><use href="#nrain"/></svg>
      <svg class="r10 i24"><use href="#nwand"/></svg>
      <svg class="wave" viewBox="0 0 28 8"><path d="M1 5c6 3 9 3 13 0s9-3 13-1" fill="none" stroke="#555"/></svg>
      <b class="arrup r-a"></b><b class="arrup r-b"></b><b class="arr r-c"></b><b class="arr barred r-d"></b>
    </aside>

    <section class="panel">
      <div class="ptitle"><span>部件导航器</span><i class="pmax"></i></div>
      <div class="tree">
        <div class="thead"><span>名称</span><b class="arrup dark"></b></div>
        <div class="tbody">
          <div class="row l1 first"><i class="noexp"></i><svg class="i16"><use href="#clock"/></svg><span>历史记录模式</span></div>
          <div class="row l1 alt"><i class="exp">+</i><svg class="i16"><use href="#mview"/></svg><span>模型视图</span></div>
          <div class="row l1"><i class="exp">+</i><svg class="i16"><use href="#check"/></svg><svg class="i16"><use href="#camr"/></svg><span>摄像机</span></div>
          <div class="row l1 alt"><i class="noexp"></i><svg class="i16"><use href="#folderx"/></svg><span>用户表达式</span></div>
          <div class="row l1"><i class="exp">−</i><svg class="i16"><use href="#folder"/></svg><span>模型历史记录</span></div>
          <div class="row l2 alt dim"><i class="cb"></i><svg class="i14"><use href="#tcs"/></svg><span>基准坐标系 (0)</span></div>
          <div class="row l2 dim"><i class="cb"></i><svg class="i14"><use href="#tsk"/></svg><span>草图 (1) "SKETCH</span></div>
          <div class="row l2 alt"><i class="cb"></i><svg class="i14"><use href="#text"/></svg><span>拉伸 (2)</span></div>
          <div class="row l2"><i class="cb"></i><svg class="i14"><use href="#text"/></svg><span>拉伸 (3)</span></div>
          <div class="row l2 alt"><i class="cb"></i><svg class="i14"><use href="#tshell"/></svg><span>抽壳 (4)</span></div>
          <div class="row l2"><i class="cb"></i><svg class="i14"><use href="#thole"/></svg><span>简单孔 (5)</span></div>
          <div class="row l2 alt"><i class="cb"></i><svg class="i14"><use href="#tdraft"/></svg><span>拔模 (6)</span></div>
          <div class="row l2"><i class="cb"></i><svg class="i14"><use href="#tdraft"/></svg><span>拔模 (7)</span></div>
          <div class="row l2 alt cur"><i class="cb"></i><svg class="i14"><use href="#tblend"/></svg><span>边倒圆 (8)</span></div>
          <div class="row"></div><div class="row alt"></div><div class="row"></div><div class="row alt"></div><div class="row"></div>
        </div>
        <div class="hscroll"><b class="sl"></b><span class="thumb">III</span><b class="sr"></b></div>
      </div>
      <div class="grip"></div>
      <div class="sect"><span>相依性</span><svg class="chev"><use href="#chev"/></svg></div>
      <div class="sect"><span>细节</span><svg class="chev"><use href="#chev"/></svg></div>
      <div class="sect"><span>预览</span><svg class="chev"><use href="#chev"/></svg></div>
    </section>

    <section class="viewport">
      <svg class="scene" viewBox="220 180 1146 526">
        <!-- flange -->
        <g transform="rotate(1.800 728 498)">
          <ellipse cx="728" cy="503" rx="276" ry="151" fill="url(#gEdge)"/>
          <ellipse cx="728" cy="497" rx="275.500" ry="150" fill="#fec600" stroke="#f3ae00" stroke-width="1.200"/>
        </g>
        <!-- wall -->
        <path d="M495 387 L486 484 A240 129 2 0 0 971 500 L972 407 Z" fill="url(#gWall)"/>
        <!-- wall fillet -->
        <path d="M486 486 A240 129 2 0 0 971 502" fill="none" stroke="#ffae00" stroke-width="3.500" filter="url(#soft)"/>
        <!-- top face -->
        <ellipse cx="733.500" cy="398" rx="239" ry="130" transform="rotate(2.400 733.500 398)" fill="#e99f00" filter="url(#soft)"/>
        <ellipse cx="733.500" cy="397.500" rx="238.500" ry="129" transform="rotate(2.400 733.500 397.500)" fill="#ffc800"/>
        <!-- centre bore -->
        <path d="M677 441C650 425 630 410 630 393C630 362 676 341 733 341C790 341 836 365 836 400C836 420 815 436 788 447C770 433 700 428 677 441Z" fill="url(#gBore)"/>
        <path d="M677 441C700 430 770 435 788 447" fill="none" stroke="#e59b00" stroke-width="3" filter="url(#soft)"/>
        <path d="M681 443C705 435 765 438 784 449" fill="none" stroke="#ffdc55" stroke-width="1.400" filter="url(#soft)"/>
        <!-- six bolt holes -->
        <g transform="translate(591 338)" clip-path="url(#hc)"><ellipse rx="28" ry="16" fill="url(#gHole)"/><ellipse cy="9" rx="30" ry="13" fill="#b97400"/></g>
        <g transform="translate(832 323)" clip-path="url(#hc)"><ellipse rx="28" ry="16" fill="url(#gHole)"/><ellipse cy="9" rx="30" ry="13" fill="#ab6a00"/></g>
        <g transform="translate(903 386)" clip-path="url(#hc)"><ellipse rx="28" ry="16" fill="url(#gHole)"/><ellipse cy="9" rx="30" ry="13" fill="#b06d00"/></g>
        <g transform="translate(874.500 456)" clip-path="url(#hc)"><ellipse rx="28" ry="16" fill="url(#gHole)"/><ellipse cy="9" rx="30" ry="14" fill="#d9dadc"/></g>
        <g transform="translate(633.500 470)" clip-path="url(#hc)"><ellipse rx="28" ry="16" fill="url(#gHole)"/><ellipse cy="9" rx="30" ry="13" fill="#b06d00"/><path d="M-30-3h10v20h-10z" fill="#dcddde"/></g>
        <g transform="translate(562.500 407)" clip-path="url(#hc)"><ellipse rx="28" ry="16" fill="url(#gHole)"/><ellipse cy="9" rx="30" ry="13" fill="#b97400"/><path d="M-13 13L17-2L30 6V20H-13Z" fill="#dcddde"/></g>
        <!-- triad -->
        <g class="triad">
          <path d="M268 656l14-8 11 7v13l-13 10-12-7z" fill="#c2c5c6" fill-opacity=".7" stroke="#a8acad"/>
          <path d="M268 656l12 8 13-9M280 664v14" fill="none" stroke="#a8acad"/>
          <path d="M266 655L285 643" stroke="#e23a3a" stroke-width="1.600"/>
          <path d="M268 656L292 666" stroke="#239a2c" stroke-width="2.400"/>
          <path d="M265 657V683" stroke="#2a48c8" stroke-width="2.400"/>
          <circle cx="266" cy="655" r="4" fill="#e8e8e8" stroke="#999" stroke-width=".6"/>
          <text class="tx" x="283" y="645">X</text>
          <text class="ty" x="292" y="673">Y</text>
          <text class="tz" x="260" y="692">Z</text>
        </g>
      </svg>
      <div class="gauge"><i class="gd"></i><i class="gy"></i><i class="gg"></i></div>
    </section>
  </main>

  <footer class="status">
    <span class="stflag"></span>
    <svg class="i16 st-full"><use href="#full"/></svg>
  </footer>

  <footer class="taskbar">
    <i class="orb"></i>
    <span class="task t1"><i class="dot blue"></i></span>
    <span class="task t2"><i class="dot red"></i></span>
    <span class="task t3"><i class="dot org"></i></span>
    <span class="task t4"><i class="dot bl2"></i></span>
    <span class="clockt">22:24</span>
    <i class="showdesk"></i>
  </footer>

  <div class="watermark">
    <svg class="wmhex" viewBox="0 0 88 98">
      <path d="M44 2L85 25V73L44 96L3 73V25Z" fill="#72c4ee" stroke="#fff" stroke-width="2.500"/>
      <path d="M44 3L4 26V60L20 43 44 30C44 30 68 30 68 20 60 10 52 6 44 3Z" fill="#6b9fd6"/>
      <path d="M3 60L3 73L44 95C30 84 23 70 21 60L22 44Z" fill="#6b9fd6"/>
      <path d="M44 25L66 38V61L44 74L22 61V38Z" fill="#fff"/>
      <path d="M44 30L61 40V59L44 69L27 59V40Z" fill="#6b9fd6"/>
      <path d="M44 49L61 40V59L44 69Z" fill="#72c4ee"/>
      <path d="M44 49V69M44 49L27 40M44 49L61 40" stroke="#fff" stroke-width=".7" fill="none"/>
      <path d="M44 3C70 14 78 40 70 52M85 50C70 68 50 62 44 76M4 48C20 26 40 26 44 25M20 72C30 82 50 92 60 86" stroke="#fff" stroke-width=".8" fill="none" opacity=".7"/>
    </svg>
    <div class="wmtext"><span class="wm1">3D世界网</span><span class="wm2">WWW.3DSJW.COM</span></div>
  </div>
</div>
</body>
</html>
```
FILE: styles.css
```css
* { box-sizing: border-box; }
html, body { margin: 0; height: 100%; overflow: hidden; background: #fff; }
body { font-family: "Noto Sans", "Noto Sans CJK SC", sans-serif; font-size: 11px; color: #222; }
i, b { font-style: normal; font-weight: normal; }
svg { flex: none; display: block; }
.defs { position: absolute; width: 0; height: 0; }
.app { position: relative; width: 1366px; height: 736px; display: grid; grid-template-rows: 26px 28px 94px 32px 527px 21px 8px; overflow: hidden; }

/* spacing helpers */
.ml1 { margin-left: 1px; } .ml2 { margin-left: 2px; } .ml3 { margin-left: 3px; } .ml4 { margin-left: 4px; }
.ml5 { margin-left: 5px; } .ml6 { margin-left: 6px; } .ml7 { margin-left: 7px; } .ml8 { margin-left: 8px; }
.ml9 { margin-left: 9px; } .ml10 { margin-left: 10px; } .ml11 { margin-left: 11px; } .ml12 { margin-left: 12px; } .ml13 { margin-left: 13px; }
.ml14 { margin-left: 14px; } .ml19 { margin-left: 19px; } .mln2 { margin-left: -2px; } .mln3 { margin-left: -3px; } .pl7 { padding-left: 7px; }

/* icon sizes */
.i14 { width: 14px; height: 14px; } .i16 { width: 16px; height: 16px; } .i18 { width: 18px; height: 18px; }
.i20 { width: 20px; height: 20px; } .i24 { width: 24px; height: 24px; } .i26 { width: 26px; height: 26px; }
.i30 { width: 40px; height: 34px; } .i32 { width: 36px; height: 35px; } .i34 { width: 36px; height: 35px; }
.sh { width: 34px; height: 28px; margin-top: 3px; margin-bottom: 4px; }

/* arrows */
.arr { display: block; width: 0; height: 0; border: 3.5px solid transparent; border-top: 4px solid #222; border-bottom: 0; }
.arrup { display: block; width: 0; height: 0; border: 4px solid transparent; border-bottom: 4px solid #bbb; border-top: 0; }
.arrup.dark { border-width: 0 5px 5px; border-bottom-color: #222; margin-left: 17px; }
.barred { position: relative; }
.barred::before { content: ""; position: absolute; left: -4px; top: -4px; width: 8px; height: 1px; background: #222; }

/* title bar */
.titlebar { position: relative; display: flex; align-items: center; background: #fff; }
.nxlogo { margin-left: 4px; width: 33px; font: 700 24px/26px "Liberation Sans", sans-serif; color: #7d98ad; letter-spacing: -.3px; }
.vsep { width: 1px; height: 20px; background: #d6d6d6; flex: none; }
.qa { width: 24px; height: 18px; }
.qarr { width: 12px; height: 4px; flex: none; position: relative; }
.qarr::after { content: ""; position: absolute; left: 3px; top: 0; border: 3.5px solid transparent; border-top: 4px solid #222; border-bottom: 0; }
.qarr.bar::before { content: ""; position: absolute; left: 3px; top: -3px; width: 7px; height: 1px; background: #222; }
.qatext { font-size: 11px; width: 22px; color: #111; }
.wintitle { margin-left: 368px; width: 149px; font-size: 13px; color: #111; white-space: nowrap; }
.upload { width: 104px; height: 25px; display: flex; border: 1px solid #4a9ae0; border-radius: 3px; margin-top: -2px; overflow: hidden; background: linear-gradient(#d9effd, #a6d7f8); }
.upicon { width: 31px; background: linear-gradient(#3f9dea, #2180d4); display: flex; align-items: center; justify-content: center; }
.upsvg { width: 22px; height: 16px; }
.uptext { margin-left: 11px; font-size: 12px; line-height: 23px; color: #4b6a80; }
.siemens { margin-left: 238px; width: 62px; font: 700 12px/1 "Liberation Sans", sans-serif; letter-spacing: 1.100px; color: #129a98; }
.wc { width: 22px; height: 22px; }
.sogou { position: absolute; left: 486px; top: 0; display: flex; }
.slogo { width: 27px; height: 25px; background: #f4611e; border-radius: 5px; transform: rotate(-12deg); color: #fff; font: 900 21px/25px "Liberation Sans", sans-serif; text-align: center; z-index: 1; }
.sgbar { width: 158px; height: 24px; margin: 3px 0 0 -1px; padding-left: 7px; display: flex; align-items: center; justify-content: space-between; padding-right: 3px; border: 1px solid #c8d6e4; background: #fff; }
.sgA { color: #e02020; font: 700 17px/20px "Liberation Sans", sans-serif; }
.sg { width: 16px; height: 16px; }

/* tab row */
.tabs { display: flex; background: #c6d6d4; align-items: stretch; }
.tab { padding: 0 13px; font-size: 13px; line-height: 28px; color: #222; white-space: nowrap; }
.tab.file { width: 81px; margin-right: 2px; padding: 0; text-align: center; color: #fff; background: #5a8a82; }
.tab.active { background: #fff; color: #2a90c4; border-top: 1px solid #ddd; line-height: 26px; }
.tab.pmi { width: 51px; }
.tabright { margin-left: auto; display: flex; align-items: center; padding-right: 8px; }
.search { width: 125px; height: 20px; display: flex; align-items: center; justify-content: space-between; padding: 0 1px 0 1px; background: #fff; border: 1px solid #aaa; color: #a8a8a8; font-size: 12px; }
.cell22 { width: 22px; height: 18px; }

/* ribbon */
.ribbon { display: flex; background: #fff; border-bottom: 2px solid #ddd; }
.group { display: flex; flex-direction: column; height: 92px; position: relative; }
.group::after { content: ""; position: absolute; right: 0; top: 5px; bottom: 4px; width: 1px; background: #dcdcdc; }
.g-win { width: 50px; } .g-ori { width: 196px; } .g-vis { width: 532px; } .g-sty { width: 89px; } .g-viz { width: 316px; }
.g-rest { flex: 1; } .g-rest::after { display: none; }
.gbody { height: 73px; display: flex; align-items: flex-start; padding-top: 5px; }
.gfoot { flex: 1; display: flex; align-items: center; }
.glabel { color: #3a9ccb; font-size: 11px; }
.lb-ori { margin-left: 78px; } .lb-vis { margin-left: 241px; } .lb-sty { margin-left: 25px; } .lb-viz { margin-left: 132px; }
.corner { margin-left: auto; margin-right: 8px; }
.g-rest .corner { margin-right: 5px; }
.big { display: flex; flex-direction: column; align-items: center; white-space: nowrap; line-height: 18px; flex: none; }
.big .arr { margin-top: 2px; }
.w33 { width: 33px; } .w44 { width: 44px; } .w49 { width: 49px; } .w50 { width: 49px; } .w55 { width: 55px; } .w66 { width: 66px; } .w80 { width: 80px; }
.grid3 { display: grid; grid-template-columns: repeat(3, 25px); grid-auto-rows: 22px; place-items: center; margin-top: -3px; }
.grid2 { display: grid; grid-template-columns: repeat(2, 25px); grid-auto-rows: 22px; place-items: center; margin-top: -3px; }
.more { display: flex; flex-direction: column; align-items: center; width: 38px; line-height: 18px; flex: none; }
.morebox { width: 38px; height: 34px; border: 1px solid #efefef; border-radius: 3px; display: flex; align-items: center; justify-content: center; margin-bottom: 1px; }
.more .arr { margin-top: 2px; }
.gallery { width: 115px; height: 66px; border: 1px solid #ddd; flex: none; padding: 0; }
.grow { height: 22px; display: flex; align-items: center; padding: 0 0 5px 2px; gap: 5px; }
.spin { width: 18px; height: 66px; flex: none; display: flex; flex-direction: column; align-items: center; padding-top: 7px; }
.spin .arr { margin-top: 16px; }
.spin .arr.barred { margin-top: 18px; }
.layer { width: 80px; flex: none; }
.layer.lift { margin-top: -4px; }
.mini { width: 49px; height: 20px; border: 1px solid #999; padding-left: 4px; font-size: 12px; line-height: 18px; display: flex; align-items: center; justify-content: space-between; padding-right: 6px; margin: 1px 0 3px; }
.lrow { height: 22px; display: flex; align-items: center; gap: 4px; white-space: nowrap; }
.png { font: 700 14px/16px "Liberation Sans", sans-serif; color: #564a8c; margin-top: 1px; }
.pngarrow { width: 0; height: 0; border-left: 8px solid #b5339c; border-top: 7px solid transparent; border-bottom: 7px solid transparent; margin: 1px 0 3px 20px; }

/* selection bar */
.toolbar { display: flex; align-items: center; background: #fff; border-bottom: 1px solid #a8a8a8; }
.menutext { margin-left: 3px; font-size: 11px; color: #222; white-space: nowrap; }
.tsep { width: 1px; height: 22px; background: #d8d8d8; flex: none; }
.combo { height: 20px; padding: 0 7px 0 2px; border: 1px solid #a8a8a8; display: flex; align-items: center; justify-content: space-between; font-size: 11px; color: #222; }
.c133 { width: 133px; } .c140 { width: 140px; }
.tb { width: 24px; height: 23px; display: flex; align-items: center; justify-content: center; flex: none; }
.tb.on { background: #c8d6d4; border: 1px solid #8fb0ac; }
.tbarr { width: 12px; height: 4px; flex: none; position: relative; }
.tbarr::after { content: ""; position: absolute; left: 2px; top: 0; border: 3px solid transparent; border-top: 4px solid #222; border-bottom: 0; }
.tend { margin-left: auto; margin-right: 5px; margin-top: 8px; }

/* main */
.main { display: flex; border-bottom: 1px solid #a8a8a8; min-height: 0; }
.rail { position: relative; width: 32px; flex: none; background: #dcdcdc; border-right: 1px solid #a8a8a8; }
.rail > svg { position: absolute; }
.r1 { left: 6px; top: 3px; } .r2 { left: 5px; top: 51px; } .r3 { left: 5px; top: 93px; }
.railtab { position: absolute; left: 2px; top: 125px; width: 30px; height: 45px; background: #fff; border: 1px solid #b5b5b5; border-right: 0; display: flex; align-items: center; justify-content: center; }
.r5 { left: 4px; top: 176px; } .r6 { left: 5px; top: 232px; } .r7 { left: 6px; top: 285px; }
.r8 { left: 6px; top: 339px; } .r9 { left: 6px; top: 380px; } .r10 { left: 6px; top: 423px; }
.wave { left: 2px; top: 449px; width: 28px; height: 8px; }
.rail > b { position: absolute; left: 11px; }
.r-a { top: 466px; } .r-b { top: 481px; } .r-c { top: 497px; left: 12px !important; } .r-d { top: 514px; left: 12px !important; }

.panel { width: 188px; flex: none; background: #fff; border-right: 1px solid #a8a8a8; display: flex; flex-direction: column; }
.ptitle { height: 28px; display: flex; align-items: center; justify-content: space-between; padding: 2px 16px 4px 10px; font-size: 11.500px; color: #333; }
.pmax { width: 12px; height: 11px; border: 1px solid #222; border-top-width: 2px; }
.tree { margin-left: 6px; width: 172px; height: 415px; border: 1px solid #ddd; border-bottom: 0; padding: 0 1px; }
.thead { height: 22px; background: #efefef; border-bottom: 1px solid #ddd; display: flex; align-items: center; padding-left: 6px; font-size: 12px; color: #222; letter-spacing: 0; }
.tbody { height: 374px; overflow: hidden; }
.row { position: relative; height: 20px; display: flex; align-items: center; white-space: nowrap; overflow: hidden; border-bottom: 1px solid #ebebeb; font-size: 12px; color: #222; flex: none; }
.row.alt { background: #f9f9f9; }
.row.l1::before, .row.l2::before { content: ""; position: absolute; height: 10px; top: 0; border-left: 1px dotted #777; border-bottom: 1px dotted #777; }
.row.l1::before { left: 9px; width: 10px; }
.row.l2::before { left: 28px; width: 11px; }
.row.first::before { top: 10px; border-bottom: 0; border-top: 1px dotted #777; height: 10px; }
.row span { margin-left: 3px; }
.exp { position: relative; z-index: 1; margin-left: 5px; width: 9px; height: 9px; border: 1px solid #bbb; background: #fff; font-size: 9px; line-height: 6px; text-align: center; color: #111; flex: none; }
.noexp { margin-left: 5px; width: 9px; flex: none; }
.row.l1 > svg:first-of-type { margin-left: 5px; position: relative; }
.row.l2 { padding-left: 40px; }
.row.l2 > svg { margin-left: 4px; }
.cb { position: relative; width: 12px; height: 12px; border: 1px solid #222; background: #fff; flex: none; }
.cb::after { content: ""; position: absolute; left: 1px; top: 0; width: 9px; height: 5px; border-left: 2.500px solid #18b030; border-bottom: 2.500px solid #18b030; transform: rotate(-50deg); }
.dim { color: #a8a8a8; }
.cur { font-weight: 700; }
.hscroll { height: 16px; background: #eee; display: flex; align-items: center; position: relative; }
.thumb { position: absolute; left: 18px; width: 54px; height: 15px; background: linear-gradient(#f2f2f2, #c6c6c6); border: 1px solid #999; border-radius: 2px; text-align: center; font: 8px/13px "Liberation Sans", sans-serif; color: #444; }
.sl { position: absolute; left: 6px; border: 4px solid transparent; border-right: 4px solid #222; border-left: 0; }
.sr { position: absolute; right: 6px; border: 4px solid transparent; border-left: 4px solid #222; border-right: 0; }
.grip { margin: 0 0 0 6px; width: 172px; height: 5px; background: #dcdcdc; border: 1px solid #aaa; flex: none; }
.sect { height: 24px; margin-left: 6px; width: 172px; flex: none; display: flex; align-items: center; justify-content: space-between; padding: 3px 7px 0 7px; font-size: 13px; color: #3a9ccb; border-bottom: 2px solid #d4d4d4; }
.chev { width: 12px; height: 10px; margin-top: -3px; }

.viewport { position: relative; flex: 1; background: linear-gradient(#b4b6b8 0%, #c6c8c9 25%, #d9dadc 60%, #e7e8ea 100%); overflow: hidden; }
.scene { width: 100%; height: 100%; }
.tx, .ty, .tz { font: 11px "Liberation Sans", sans-serif; }
.tx { fill: #e23a3a; } .ty { fill: #239a2c; } .tz { fill: #2a48c8; }
.gauge { position: absolute; right: 0; top: 365px; width: 9px; height: 59px; background: #4a4f58; border-radius: 3px 0 0 3px; padding: 6px 0 0 3px; }
.gauge i { display: block; width: 4px; }
.gd { height: 16px; background: repeating-linear-gradient(#777 0 1px, #333 1px 2px); }
.gy { height: 14px; background: repeating-linear-gradient(#e8c23a 0 1px, #4a4f58 1px 2px); }
.gg { height: 17px; background: repeating-linear-gradient(#6fe08a 0 1px, #4a4f58 1px 2px); }

/* status */
.status { background: #fff; display: flex; align-items: center; justify-content: flex-end; padding-right: 56px; gap: 5px; }
.stflag { width: 15px; height: 13px; background: repeating-conic-gradient(#999 0 25%, #ddd 0 50%) 0 0 / 4px 4px; }

/* taskbar */
.taskbar { position: relative; background: linear-gradient(#0f2c38 0, #2a6072 3px, #1d4d5e 100%); display: flex; overflow: hidden; }
.orb { position: absolute; left: 12px; top: 1px; width: 30px; height: 30px; border-radius: 50%; background: #cfe0ea; border: 1px solid #9ab; }
.task { position: absolute; top: 1px; height: 12px; border: 1px solid #08222c; border-radius: 2px; background: linear-gradient(#9ab5bf, #5e8492); }
.t1 { left: 60px; width: 58px; } .t2 { left: 122px; width: 58px; } .t3 { left: 184px; width: 53px; } .t4 { left: 246px; width: 58px; }
.dot { position: absolute; top: 2px; width: 16px; height: 12px; border-radius: 3px 3px 0 0; }
.t1 .dot { left: 20px; border-radius: 50%; } .t2 .dot { left: 16px; } .t3 .dot { left: 12px; } .t4 .dot { left: 14px; }
.blue { background: #2a8fe0; } .red { background: #e0506a; } .org { background: #e0a040; } .bl2 { background: #5a8ad8; }
.clockt { position: absolute; left: 1280px; top: 5px; color: #fff; font: 700 10px/12px "Liberation Sans", sans-serif; letter-spacing: 1px; }
.showdesk { position: absolute; right: 0; top: 0; width: 10px; height: 8px; background: #6f8c96; border: 1px solid #aac; }

/* watermark */
.watermark { position: absolute; left: 1064px; top: 632px; display: flex; pointer-events: none; }
.wmhex { width: 87px; height: 98px; }
.wmtext { margin-left: 7px; padding-top: 19px; display: flex; flex-direction: column; }
.wm1 { font: 900 44px/48px "DejaVu Sans", "Noto Sans CJK SC", sans-serif; letter-spacing: 0; color: #72c6ec; -webkit-text-stroke: 4px #f4f6f8; paint-order: stroke fill; white-space: nowrap; }
.wm2 { margin-top: 0; font: 700 15px/14px "DejaVu Sans", sans-serif; letter-spacing: 3.100px; color: #72c6ec; -webkit-text-stroke: 1.500px #f4f6f8; paint-order: stroke fill; white-space: nowrap; }
```
